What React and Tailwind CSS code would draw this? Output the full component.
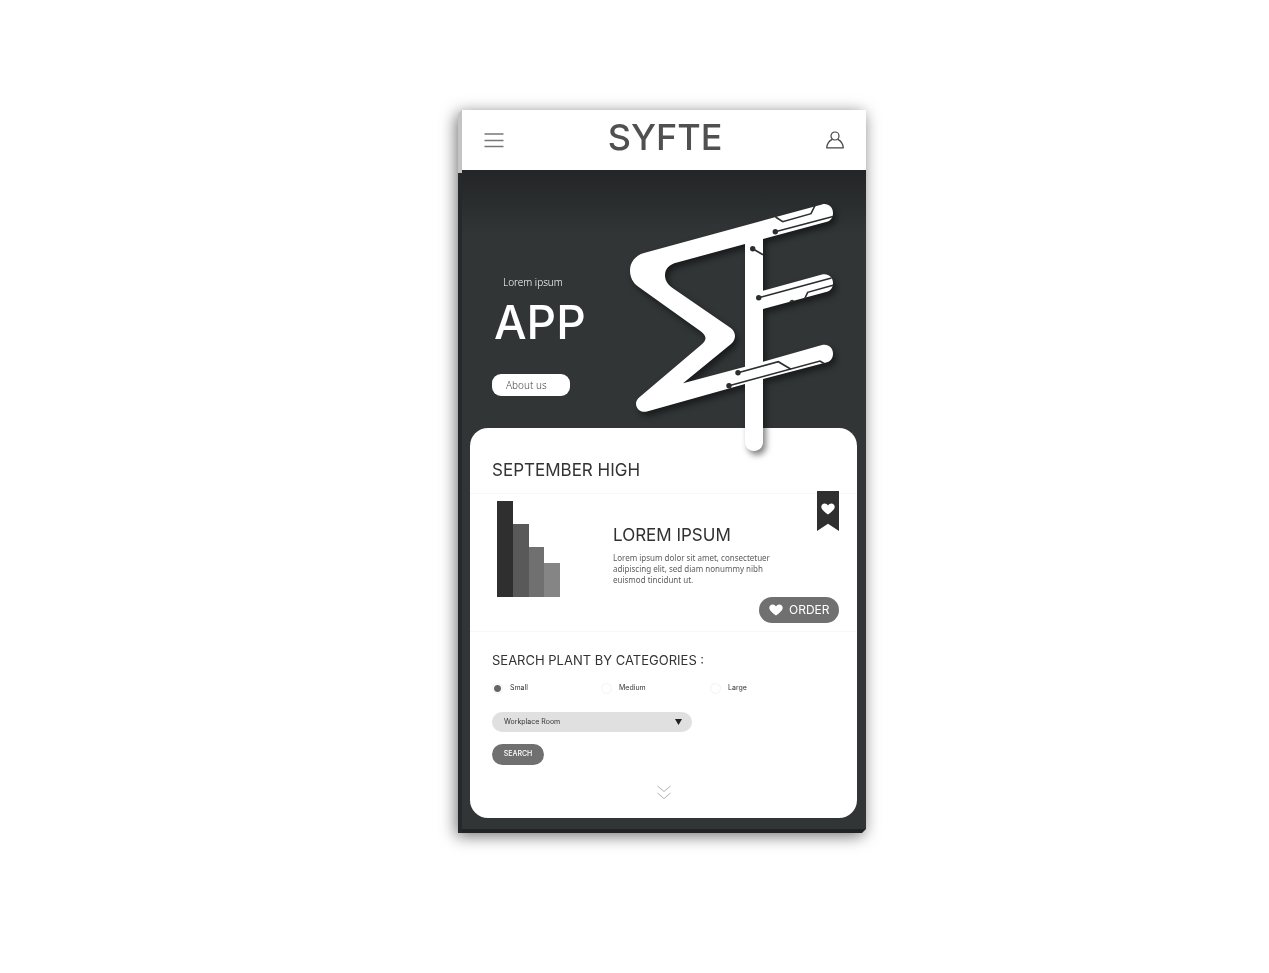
import React from "react";

function Heart({ className }) {
  return (
    <svg viewBox="0 0 14 12" className={className} fill="currentColor" aria-hidden="true">
      <path d="M7 11.6C4.5 9.6 0.3 7 0.3 3.8 0.3 1.8 1.8 0.4 3.6 0.4 5.1 0.4 6.3 1.2 7 2.4 7.7 1.2 8.9 0.4 10.4 0.4 12.2 0.4 13.7 1.8 13.7 3.8 13.7 7 9.5 9.6 7 11.6Z" />
    </svg>
  );
}

function Emblem() {
  return (
    <svg
      viewBox="630 204 204 248"
      className="h-[248px] w-[204px] shrink-0 overflow-visible drop-shadow-[3px_4px_3px_rgba(0,0,0,0.5)]"
      aria-hidden="true"
    >
      <path
        fill="#fff"
        d="M822 204.4C828 203 833 207 833 213C833 217 831 220.5 827 221.7L763 239V290.7L822 274.5C828 273 833 277 833 283C833 287 831 290.5 827 291.7L763 309V361.7L822 345C828 343.500 833 347.500 833 353.500C833 357.500 831 361 827 362.200L763 379V442C763 447.200 759 451 754 451C749 451 745 447.200 745 442V384L647 411.500C641 413 636 409 636 403.500C636 401 637.500 398.700 640 396.700L701 345C707 340 707 336.500 701 331.500L638 286.500C633 283 630 277 630 270.500C630 262 635.500 255.500 644 253ZM745 244L677 262.500C669 264.500 665 269 665 275C665 281 668 285 674 289L730 327.500C736.500 332 736.500 339 731 344L683 383.300L745 366.700Z"
      />
      <g fill="none" stroke="#2b2e2f" strokeWidth="1.6">
        <path d="M775.500 217L782.700 221.700L811 213.700L815 205.500" />
        <path d="M775.300 231.700L833 216.500" />
        <path d="M752.700 248.700L763 254.800" />
        <path d="M758.700 297.700L831.500 278" />
        <path d="M804.500 299L807.700 292.300L833 285.300" />
        <path d="M738 372.700L778.300 361.700L791 369.300" />
        <path d="M729 385.700L820 361L824 363.500" />
      </g>
      <g fill="#2b2e2f">
        <circle cx="775.300" cy="231.700" r="2.700" />
        <circle cx="752.700" cy="248.700" r="2.700" />
        <circle cx="758.700" cy="297.700" r="2.700" />
        <circle cx="738" cy="372.700" r="2.700" />
        <circle cx="729" cy="385.700" r="2.700" />
        <path d="M789.500 302.300A2.400 2.400 0 0 1 794 301.100Z" />
      </g>
    </svg>
  );
}

function Header() {
  return (
    <header className="flex h-[60px] items-center justify-between bg-white pl-[22px] pr-[22px]">
      <button type="button" aria-label="Menu" className="w-5 text-[#777]">
        <svg viewBox="0 0 20 16" className="h-4 w-5" stroke="currentColor" strokeWidth="1.5" aria-hidden="true">
          <path d="M0.500 2H19.500M0.500 8.500H19.500M0.500 14.500H19.500" />
        </svg>
      </button>
      <h1 className="pb-[6px] text-[36px] leading-10 font-medium text-[#505050]">SYFTE</h1>
      <button type="button" aria-label="Account" className="text-[#444]">
        <svg viewBox="0 0 18 18" className="h-[18px] w-[18px]" fill="none" stroke="currentColor" strokeWidth="1.2" strokeLinejoin="round" aria-hidden="true">
          <circle cx="9" cy="5" r="4" />
          <path d="M6.400 8.400C3.300 9.600 1.200 12.300 0.700 16.800H17.300C16.800 12.300 14.700 9.600 11.600 8.400" />
        </svg>
      </button>
    </header>
  );
}

function Hero() {
  return (
    <section className="relative z-10 flex h-[258px] items-start justify-between pl-[30px] pr-8">
      <div className="flex flex-col items-start pt-[104px]">
        <p className="ml-[11px] font-['Noto_Sans'] text-[10px] leading-4 font-light text-white">Lorem ipsum</p>
        <h2 className="mt-1 ml-[2px] text-[46px] leading-[56px] font-medium text-white">APP</h2>
        <a
          href="#about"
          className="mt-[24px] flex h-[22px] w-[78px] items-center rounded-[9px] bg-white pl-[14px] font-['Noto_Sans'] text-[10px] font-light text-[#444]"
        >
          About us
        </a>
      </div>
      <div className="pt-[34px]">
        <Emblem />
      </div>
    </section>
  );
}

const bars = [
  { height: 96, tone: "bg-[#2f2f2f]" },
  { height: 73, tone: "bg-[#595959]" },
  { height: 50, tone: "bg-[#707070]" },
  { height: 34, tone: "bg-[#858585]" },
];

function Product() {
  return (
    <article className="relative flex h-[139px] items-start border-y border-[#f7f7f7] pl-[27px]">
      <div className="mt-[7px] flex h-24 w-[63px] shrink-0 items-end" aria-hidden="true">
        {bars.map((bar) => (
          <div key={bar.height} className={`w-4 ${bar.tone}`} style={{ height: bar.height }} />
        ))}
      </div>
      <div className="ml-[53px] pt-[31px]">
        <h3 className="text-[17px] leading-5 text-[#303030]">LOREM IPSUM</h3>
        <p className="mt-[7px] w-[176px] font-['Noto_Sans'] text-[8px] leading-[11px] text-[#5c5c5c]">
          Lorem ipsum dolor sit amet, consectetuer adipiscing elit, sed diam nonummy nibh euismod tincidunt ut.
        </p>
      </div>
      <button type="button" aria-label="Save" className="absolute -top-[3px] right-[18px] h-10 w-[22px] bg-[#2f2f2f] text-white [clip-path:polygon(0_0,100%_0,100%_100%,50%_82%,0_100%)]">
        <Heart className="mx-auto -mt-1 h-3 w-[14px]" />
      </button>
      <button type="button" className="absolute right-[18px] bottom-2 flex h-[26px] w-20 items-center gap-[6px] rounded-full bg-[#707070] pl-[10px] text-[12px] text-white">
        <Heart className="h-3 w-[14px] shrink-0" />
        ORDER
      </button>
    </article>
  );
}

function SearchForm() {
  return (
    <form className="flex flex-col items-start px-[22px]" onSubmit={(e) => e.preventDefault()}>
      <h3 className="mt-5 text-[13px] leading-4 text-[#333]">SEARCH PLANT BY CATEGORIES :</h3>
      <div role="radiogroup" aria-label="Size" className="mt-[14px] flex">
        {["Small", "Medium", "Large"].map((size, i) => (
          <label key={size} className="flex w-[109px] items-center gap-[7px] text-[7px] leading-3 text-[#333]">
            <input
              type="radio"
              name="size"
              defaultChecked={i === 0}
              className="h-[11px] w-[11px] appearance-none rounded-full border border-[#f2f4f2] bg-white checked:bg-[radial-gradient(circle,#666_3px,transparent_4px)]"
            />
            {size}
          </label>
        ))}
      </div>
      <div className="relative mt-[18px] flex w-[200px] items-center">
        <select aria-label="Location" className="block h-5 w-full appearance-none rounded-full bg-[#e0e0e0] px-3 text-[7px] text-[#333]">
          <option>Workplace Room</option>
        </select>
        <svg viewBox="0 0 7 6" className="pointer-events-none absolute right-[10px] h-[6px] w-[7px]" fill="#222" aria-hidden="true">
          <path d="M0 0H7L3.500 6Z" />
        </svg>
      </div>
      <button type="submit" className="mt-3 h-[21px] w-[52px] rounded-full bg-[#707070] text-[7px] font-medium text-white">
        SEARCH
      </button>
      <button type="button" aria-label="Show more" className="mt-5 mb-[18px] self-center text-[#aaa]">
        <svg viewBox="0 0 14 15" className="block h-[15px] w-[14px]" fill="none" stroke="currentColor" strokeWidth="0.900" aria-hidden="true">
          <path d="M0.500 1L7 6.500L13.500 1M0.500 8L7 13.500L13.500 8" />
        </svg>
      </button>
    </form>
  );
}

export default function App() {
  return (
    <main className="flex min-h-screen items-start justify-center bg-white pt-[110px] pb-10 pl-[55px] font-['Inter',sans-serif]">
      <div className="w-full max-w-[408px] drop-shadow-[-2px_3px_8px_rgba(0,0,0,0.55)]">
        <div className="flex [clip-path:polygon(4px_0,100%_0,100%_calc(100%_-_4px),calc(100%_-_4px)_100%,0_100%,0_4px)]">
          <div className="w-1 shrink-0 bg-[linear-gradient(to_bottom,#c4c4c4_63px,#262829_63px)]" />
          <div className="grow border-b-4 border-[#212325]">
            <Header />
            <div className="bg-[linear-gradient(to_bottom,#232526,#313536_64px)] pb-[11px]">
              <Hero />
              <section className="mr-[9px] ml-2 rounded-[18px] bg-white">
                <h2 className="h-[65px] pt-8 pl-[22px] text-[17px] leading-5 text-[#333]">SEPTEMBER HIGH</h2>
                <Product />
                <SearchForm />
              </section>
            </div>
          </div>
        </div>
      </div>
    </main>
  );
}
